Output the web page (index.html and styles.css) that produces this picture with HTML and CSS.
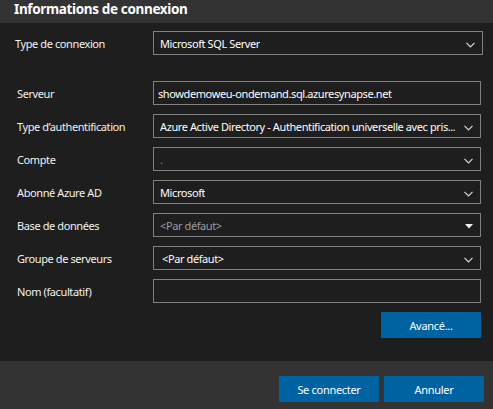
FILE: index.html
```html
<!DOCTYPE html>
<html lang="fr">
<head>
<meta charset="utf-8">
<title>Informations de connexion</title>
<link rel="stylesheet" href="styles.css">
</head>
<body>
<div class="dialog">
  <header class="title">Informations de connexion</header>
  <main class="content">
    <div class="row row-first">
      <span class="label">Type de connexion</span>
      <div class="field select"><span class="value">Microsoft SQL Server</span><svg class="chev" width="9" height="6" viewBox="0 0 9 6"><polyline points="0.5,0.8 4.5,4.8 8.5,0.8" fill="none" stroke="#d8d8d8" stroke-width="1.2"/></svg></div>
    </div>
    <div class="group">
      <div class="row">
        <span class="label">Serveur</span>
        <div class="field input"><span class="value tight">showdemoweu-ondemand.sql.azuresynapse.net</span></div>
      </div>
      <div class="row">
        <span class="label">Type d’authentification</span>
        <div class="field select"><span class="value">Azure Active Directory - Authentification universelle avec pris...</span><svg class="chev" width="9" height="6" viewBox="0 0 9 6"><polyline points="0.5,0.8 4.5,4.8 8.5,0.8" fill="none" stroke="#d8d8d8" stroke-width="1.2"/></svg></div>
      </div>
      <div class="row">
        <span class="label">Compte</span>
        <div class="field select"><span class="value dim">.</span><svg class="chev" width="9" height="6" viewBox="0 0 9 6"><polyline points="0.5,0.8 4.5,4.8 8.5,0.8" fill="none" stroke="#d8d8d8" stroke-width="1.2"/></svg></div>
      </div>
      <div class="row">
        <span class="label">Abonné Azure AD</span>
        <div class="field select"><span class="value">Microsoft</span><svg class="chev" width="9" height="6" viewBox="0 0 9 6"><polyline points="0.5,0.8 4.5,4.8 8.5,0.8" fill="none" stroke="#d8d8d8" stroke-width="1.2"/></svg></div>
      </div>
      <div class="row">
        <span class="label">Base de données</span>
        <div class="field select"><span class="value placeholder">&lt;Par défaut&gt;</span><svg class="tri" width="8" height="5" viewBox="0 0 8 5"><polygon points="0,0 8,0 4,4.5" fill="#f0f0f0"/></svg></div>
      </div>
      <div class="row">
        <span class="label">Groupe de serveurs</span>
        <div class="field select"><span class="value inset">&lt;Par défaut&gt;</span><svg class="chev" width="9" height="6" viewBox="0 0 9 6"><polyline points="0.5,0.8 4.5,4.8 8.5,0.8" fill="none" stroke="#d8d8d8" stroke-width="1.2"/></svg></div>
      </div>
      <div class="row">
        <span class="label">Nom (facultatif)</span>
        <div class="field input"></div>
      </div>
    </div>
    <div class="actions">
      <button class="btn">Avancé...</button>
    </div>
  </main>
  <footer class="footer">
    <button class="btn">Se connecter</button>
    <button class="btn">Annuler</button>
  </footer>
</div>
</body>
</html>
```
FILE: styles.css
```css
* { box-sizing: border-box; }

html, body {
  margin: 0;
  padding: 0;
  background: #1e1e1e;
}

body {
  font-family: "Noto Sans", "Open Sans", sans-serif;
  font-size: 11px;
  letter-spacing: -0.4px;
  color: #f2f2f2;
}

.dialog {
  width: 493px;
  height: 409px;
  display: flex;
  flex-direction: column;
  background: #1e1e1e;
}

.title {
  height: 23px;
  background: #333333;
  color: #ffffff;
  font-weight: 700;
  font-size: 13.5px;
  letter-spacing: -0.35px;
  line-height: 19px;
  padding-left: 14px;
}

.content {
  flex: 1;
  padding-top: 8px;
}

.row {
  display: grid;
  grid-template-columns: 153px 328px;
  align-items: center;
  height: 24px;
}

.row .label {
  padding-left: 17px;
}

.row-first {
  grid-template-columns: 153px 330px;
}

.row-first .label {
  padding-left: 15px;
}

.group {
  margin-top: 26px;
  display: flex;
  flex-direction: column;
  gap: 9px;
}

.field {
  height: 24px;
  border: 1px solid #808080;
  display: flex;
  align-items: center;
  justify-content: space-between;
  padding: 0 7px 0 6px;
  overflow: hidden;
}

.value {
  white-space: nowrap;
  overflow: hidden;
  text-overflow: ellipsis;
  color: #ffffff;
}

.value.tight {
  margin-left: -2px;
}

.value.inset {
  margin-left: 2px;
}

.value.placeholder {
  color: #9c9c9c;
}

.value.dim {
  color: #8a8a8a;
}

.chev {
  flex: none;
  margin-left: 4px;
  margin-top: 3px;
}

.tri {
  flex: none;
  margin-left: 4px;
  margin-top: 2px;
}

.actions {
  display: flex;
  justify-content: flex-end;
  padding-right: 12px;
  margin-top: 9px;
}

.btn {
  width: 100px;
  height: 26px;
  border: none;
  background: #0063a1;
  color: #ffffff;
  font-family: "Noto Sans", "Open Sans", sans-serif;
  font-size: 11px;
  letter-spacing: -0.3px;
  padding: 0;
}

.footer {
  height: 48px;
  background: #333333;
  display: flex;
  justify-content: flex-end;
  align-items: flex-start;
  gap: 5px;
  padding: 15px 9px 0 0;
}
```
